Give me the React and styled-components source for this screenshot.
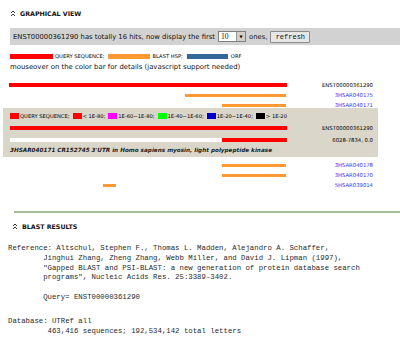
import React from 'react'
import styled, { createGlobalStyle } from 'styled-components'

const RED = '#ff0000'
const ORANGE = '#ff9933'

const GlobalStyle = createGlobalStyle`
  html, body { margin: 0; padding: 0; background: #fff; }
  body {
    font-family: "DejaVu Sans", Verdana, sans-serif;
    color: #111;
    width: 400px;
    height: 342px;
    overflow: hidden;
  }
`

const Page = styled.div`
  display: flex;
  flex-direction: column;
`

const SectionHead = styled.div`
  display: flex;
  align-items: center;
  gap: 4px;
  height: 10px;
  padding-left: ${p => p.indent}px;
  margin-top: ${p => p.top}px;
  font-size: 6.3px;
  font-weight: bold;
  color: #111;
`

const InfoBar = styled.div`
  display: flex;
  align-items: center;
  gap: 3px;
  height: 17px;
  margin: 10px 0 0 10px;
  padding-left: 3px;
  background: #d2d2d2;
  font-size: 6.8px;
  white-space: nowrap;
`

const Select = styled.div`
  display: flex;
  width: 28px;
  height: 11px;
  box-sizing: border-box;
  border: 1px solid #7f7f7f;
  background: #fff;
`

const SelectValue = styled.span`
  flex: 1;
  padding-left: 2px;
  font-family: "Liberation Serif", "Times New Roman", serif;
  font-size: 7.5px;
  line-height: 9px;
`

const SelectArrow = styled.span`
  width: 8px;
  display: flex;
  align-items: center;
  justify-content: center;
  background: #d4d0c8;
  border-left: 1px solid #999;
  font-size: 4px;
  color: #000;
`

const Button = styled.button`
  width: 40px;
  height: 12px;
  padding: 0;
  box-sizing: border-box;
  border: 1px solid #8c8c8c;
  border-radius: 1px;
  background: #e6e6e6;
  font-family: "Liberation Mono", "Courier New", monospace;
  font-size: 7px;
  color: #111;
  line-height: 10px;
`

const Legend = styled.div`
  display: flex;
  align-items: center;
  height: ${p => p.h}px;
  margin: ${p => p.top}px 0 0 ${p => p.left}px;
`

const Swatch = styled.span`
  width: ${p => p.w}px;
  height: ${p => p.h}px;
  background: ${p => p.color};
  flex-shrink: 0;
`

const LegendText = styled.span`
  font-size: 5.2px;
  margin: 0 ${p => p.after}px 0 ${p => p.before}px;
  white-space: nowrap;
  color: #000;
`

const Note = styled.div`
  margin: 4px 0 0 10px;
  font-size: 6.9px;
  line-height: 9px;
  white-space: nowrap;
`

const Rows = styled.div`
  display: flex;
  flex-direction: column;
  margin: ${p => p.top}px 0 0 9px;
  width: 364px;
`

const Row = styled.div`
  display: flex;
  align-items: center;
  height: 10px;
`

const Track = styled.div`
  width: 278px;
  height: ${p => p.h}px;
  display: flex;
  background: ${p => p.bg || 'transparent'};
  flex-shrink: 0;
`

const Bar = styled.div`
  height: 100%;
  background: ${p => p.color};
`

const HitLabel = styled.span`
  flex: 1;
  text-align: right;
  font-size: 5.3px;
  white-space: nowrap;
  color: ${p => (p.link ? '#2f2fff' : '#000')};
`

const Detail = styled.div`
  display: flex;
  flex-direction: column;
  margin: -2px 22px 0 3px;
  padding: 3px 5px 2px 7px;
  background: #dad6ca;
`

const DetailRow = styled.div`
  display: flex;
  align-items: center;
  height: 10px;
  margin-top: 2px;
`

const Description = styled.div`
  margin-top: 1px;
  height: 9px;
  line-height: 9px;
  font-size: 5.7px;
  font-weight: bold;
  font-style: italic;
  color: #222;
  white-space: nowrap;
`

const Rule = styled.div`
  margin: 21px 0 0 14px;
  height: 2px;
  background: #a6bf98;
`

const Pre = styled.pre`
  margin: ${p => p.top}px 0 0 8px;
  font-family: "Liberation Mono", "Courier New", monospace;
  font-size: 7.33px;
  line-height: 9.8px;
  color: #2a2a2a;
`

const Caret = () => (
  <svg width="6" height="7" viewBox="0 0 6 7">
    <polyline points="1,3 3,1 5,3" fill="none" stroke="#333" strokeWidth="1" />
    <polyline points="1,6 3,4 5,6" fill="none" stroke="#333" strokeWidth="1" />
  </svg>
)

const topHits = [
  { label: 'ENST00000361290', query: true, h: 4, bars: [{ x: 0, w: 278, color: RED }] },
  { label: '3HSAR040175', h: 3, bars: [{ x: 176, w: 101, color: ORANGE }] },
  { label: '3HSAR040171', h: 3, bars: [{ x: 213, w: 64, color: ORANGE }] },
]

const bottomHits = [
  { label: '3HSAR040178', h: 3, bars: [{ x: 213, w: 64, color: ORANGE }] },
  { label: '3HSAR040170', h: 3, bars: [{ x: 213, w: 64, color: ORANGE }] },
  { label: '5HSAR039014', h: 3, bars: [{ x: 94, w: 13, color: ORANGE }] },
]

const scoreLegend = [
  { color: RED, text: 'QUERY SEQUENCE;' },
  { color: RED, text: '< 1E-80;' },
  { color: '#ff00ff', text: '1E-60~1E-80;' },
  { color: '#00ff00', text: '1E-40~1E-60;' },
  { color: '#0000cc', text: '1E-20~1E-40;' },
  { color: '#000', text: '> 1E-20' },
]

const HitRow = ({ hit }) => (
  <Row>
    <Track h={hit.h}>
      {hit.bars.map((b, i) => (
        <Bar key={i} color={b.color} style={{ marginLeft: b.x, width: b.w }} />
      ))}
    </Track>
    <HitLabel link={!hit.query}>{hit.label}</HitLabel>
  </Row>
)

const reference = `Reference: Altschul, Stephen F., Thomas L. Madden, Alejandro A. Schaffer,
        Jinghui Zhang, Zheng Zhang, Webb Miller, and David J. Lipman (1997),
        "Gapped BLAST and PSI-BLAST: a new generation of protein database search
        programs", Nucleic Acids Res. 25:3389-3402.

        Query= ENST00000361290`

const database = `Database: UTRef all
         463,416 sequences; 192,534,142 total letters`

export default function App() {
  return (
    <Page>
      <GlobalStyle />
      <SectionHead indent={10} top={8}>
        <Caret />
        GRAPHICAL VIEW
      </SectionHead>
      <InfoBar>
        <span>ENST00000361290 has totally 16 hits, now display the first</span>
        <Select>
          <SelectValue>10</SelectValue>
          <SelectArrow>▼</SelectArrow>
        </Select>
        <span>ones,</span>
        <Button>refresh</Button>
      </InfoBar>
      <Legend top={8} left={10} h={6}>
        <Swatch w={43} h={5} color={RED} />
        <LegendText before={2} after={3}>QUERY SEQUENCE;</LegendText>
        <Swatch w={42} h={5} color={ORANGE} />
        <LegendText before={3} after={4}>BLAST HSP;</LegendText>
        <Swatch w={41} h={5} color="#336699" />
        <LegendText before={3} after={0}>ORF</LegendText>
      </Legend>
      <Note>mouseover on the color bar for details (javascript support needed)</Note>
      <Rows top={8}>
        {topHits.map(h => <HitRow key={h.label} hit={h} />)}
      </Rows>
      <Detail>
        <Legend top={0} left={0} h={10}>
          {scoreLegend.map((s, i) => (
            <React.Fragment key={i}>
              <Swatch w={9} h={6} color={s.color} />
              <LegendText before={1} after={3}>{s.text}</LegendText>
            </React.Fragment>
          ))}
        </Legend>
        <DetailRow>
          <Track h={4}>
            <Bar color={RED} style={{ width: 277 }} />
          </Track>
          <HitLabel>ENST00000361290</HitLabel>
        </DetailRow>
        <DetailRow>
          <Track h={4} bg="#fff">
            <Bar color={RED} style={{ marginLeft: 212, width: 65 }} />
          </Track>
          <HitLabel>6028-7834, 0.0</HitLabel>
        </DetailRow>
        <Description>3HSAR040171 CR152745 3'UTR in Homo sapiens myosin, light polypeptide kinase</Description>
      </Detail>
      <Rows top={3}>
        {bottomHits.map(h => <HitRow key={h.label} hit={h} />)}
      </Rows>
      <Rule />
      <SectionHead indent={12} top={8}>
        <Caret />
        BLAST RESULTS
      </SectionHead>
      <Pre top={13}>{reference}</Pre>
      <Pre top={14}>{database}</Pre>
    </Page>
  )
}
